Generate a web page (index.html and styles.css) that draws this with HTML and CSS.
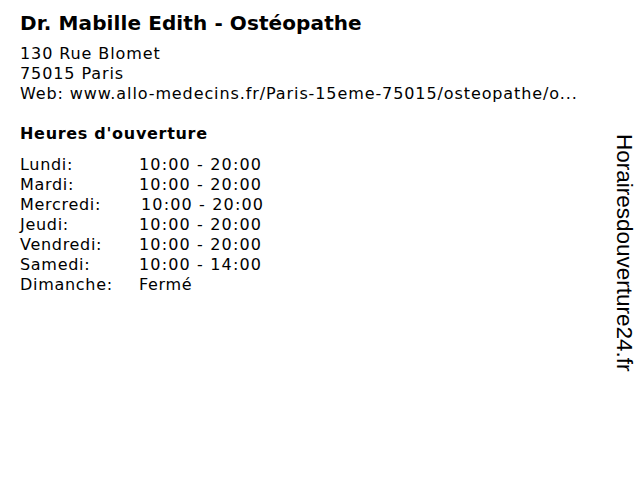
FILE: index.html
```html
<!DOCTYPE html>
<html lang="fr">
<head>
<meta charset="utf-8">
<link rel="stylesheet" href="styles.css">
</head>
<body>
<div class="page">
  <h1 class="title">Dr. Mabille Edith - Ostéopathe</h1>
  <div class="address">
    <div>130 Rue Blomet</div>
    <div>75015 Paris</div>
    <div>Web: www.allo-medecins.fr/Paris-15eme-75015/osteopathe/o...</div>
  </div>
  <h2 class="subtitle">Heures d'ouverture</h2>
  <div class="hours">
    <span>Lundi:</span><span class="time">10:00 - 20:00</span>
    <span>Mardi:</span><span class="time">10:00 - 20:00</span>
    <span>Mercredi:</span><span class="time shift">10:00 - 20:00</span>
    <span>Jeudi:</span><span class="time">10:00 - 20:00</span>
    <span>Vendredi:</span><span class="time">10:00 - 20:00</span>
    <span>Samedi:</span><span class="time">10:00 - 14:00</span>
    <span>Dimanche:</span><span>Fermé</span>
  </div>
</div>
<div class="brand">Horairesdouverture24.fr</div>
</body>
</html>
```
FILE: styles.css
```css
html, body {
  margin: 0;
  padding: 0;
  background: #fff;
}
body {
  width: 640px;
  height: 480px;
  position: relative;
  overflow: hidden;
  font-family: "DejaVu Sans", Verdana, sans-serif;
  color: #000;
}
.page {
  padding: 11px 0 0 20px;
}
.title {
  margin: 0;
  font-size: 20px;
  line-height: 24px;
  font-weight: bold;
  letter-spacing: 0.1px;
}
.address {
  margin-top: 9px;
  font-size: 16px;
  line-height: 20px;
  letter-spacing: 0.9px;
}
.subtitle {
  margin: 20px 0 0;
  font-size: 16px;
  line-height: 20px;
  font-weight: bold;
  letter-spacing: 0.7px;
}
.hours {
  margin-top: 11px;
  display: grid;
  grid-template-columns: 119px auto;
  justify-content: start;
  font-size: 16px;
  line-height: 20px;
  letter-spacing: 0.7px;
}
.time {
  letter-spacing: 1.15px;
}
.shift {
  padding-left: 2px;
}
.brand {
  position: absolute;
  left: 612px;
  top: 134px;
  writing-mode: vertical-rl;
  font-family: "Liberation Sans", Arial, sans-serif;
  font-size: 22.5px;
  line-height: 24px;
  color: #000;
}
```
